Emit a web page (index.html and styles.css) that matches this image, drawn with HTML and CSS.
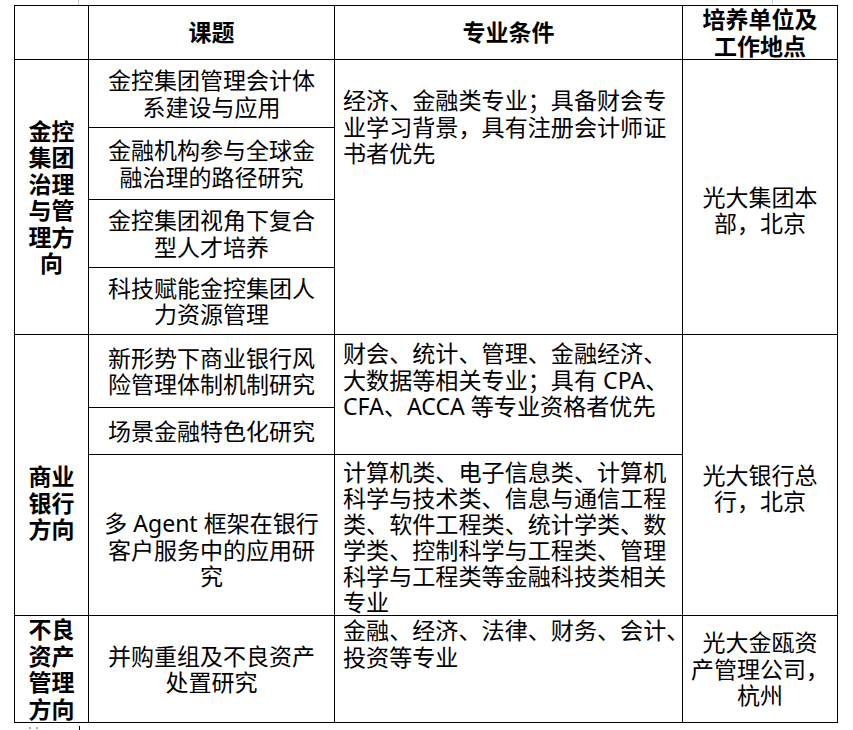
FILE: index.html
```html
<!DOCTYPE html>
<html lang="zh-CN">
<head>
<meta charset="utf-8">
<title>课题</title>
<link rel="stylesheet" href="styles.css">
</head>
<body>
<div class="page">
<table class="grid">
<colgroup><col class="c1"><col class="c2"><col class="c3"><col class="c4"></colgroup>
<tr class="h0"><th></th><th>课题</th><th>专业条件</th><th>培养单位及<br>工作地点</th></tr>
<tr class="h1"><td rowspan="4" class="cat">金控<br>集团<br>治理<br>与管<br>理方<br>向</td><td class="topic">金控集团管理会计体<br>系建设与应用</td><td rowspan="4" class="req req-a">经济、金融类专业；具备财会专<br>业学习背景，具有注册会计师证<br>书者优先</td><td rowspan="4" class="place place-a">光大集团本<br>部，北京</td></tr>
<tr class="h2"><td class="topic">金融机构参与全球金<br>融治理的路径研究</td></tr>
<tr class="h3"><td class="topic">金控集团视角下复合<br>型人才培养</td></tr>
<tr class="h4"><td class="topic">科技赋能金控集团人<br>力资源管理</td></tr>
<tr class="h5"><td rowspan="3" class="cat cat-b">商业<br>银行<br>方向</td><td class="topic">新形势下商业银行风<br>险管理体制机制研究</td><td rowspan="2" class="req req-b">财会、统计、管理、金融经济、<br>大数据等相关专业；具有 CPA、<br>CFA、ACCA 等专业资格者优先</td><td rowspan="3" class="place place-b">光大银行总<br>行，北京</td></tr>
<tr class="h6"><td class="topic">场景金融特色化研究</td></tr>
<tr class="h7"><td class="topic topic-agent">多 Agent 框架在银行<br>客户服务中的应用研<br>究</td><td class="req req-c">计算机类、电子信息类、计算机<br>科学与技术类、信息与通信工程<br>类、软件工程类、统计学类、数<br>学类、控制科学与工程类、管理<br>科学与工程类等金融科技类相关<br>专业</td></tr>
<tr class="h8"><td class="cat cat-c">不良<br>资产<br>管理<br>方向</td><td class="topic">并购重组及不良资产<br>处置研究</td><td class="req req-d">金融、经济、法律、财务、会计、<br>投资等专业</td><td class="place">光大金瓯资<br>产管理公司，<br>杭州</td></tr>
</table>
<span class="mark mark-top1"></span>
<span class="mark mark-top2"></span>
<span class="mark mark-dot1"></span>
<span class="mark mark-dot2"></span>
<span class="mark mark-tick"></span>
</div>
</body>
</html>
```

FILE: styles.css
```css
html, body {
  margin: 0;
  padding: 0;
  background: #fff;
}
.page {
  position: relative;
  width: 853px;
  height: 730px;
  overflow: hidden;
  padding-top: 5px;
  box-sizing: border-box;
}
.grid {
  margin-left: 14px;
  border-collapse: collapse;
  table-layout: fixed;
  width: 824px;
  font-family: "Noto Sans", "Noto Sans CJK SC", sans-serif;
  font-size: 23px;
  line-height: 26.5px;
  color: #000;
  white-space: nowrap;
}
.c1 { width: 74px; }
.c2 { width: 246px; }
.c3 { width: 348px; }
.c4 { width: 155px; }
.grid th, .grid td {
  border: 1px solid #000;
  padding: 0 2px;
  vertical-align: middle;
  text-align: center;
  overflow: visible;
}
.grid th {
  font-weight: bold;
}
.h0 { height: 54px; }
.h1 { height: 68px; }
.h2 { height: 72px; }
.h3 { height: 68px; }
.h4 { height: 67px; }
.h5 { height: 73px; }
.h6 { height: 47px; }
.h7 { height: 161px; }
.h8 { height: 107px; }
.grid .cat {
  font-weight: bold;
}
.grid .cat-b { padding-top: 56px; }
.grid .cat-c { padding-top: 0; padding-bottom: 0; }
.grid .topic-agent { padding-top: 30px; }
.grid .req {
  text-align: left;
  vertical-align: top;
  padding-left: 8px;
  font-size: 23.1px;
}
.grid .req-a { padding-top: 27px; }
.grid .req-b { padding-top: 5px; }
.grid .req-c { padding-top: 4px; padding-bottom: 0; line-height: 26px; }
.grid .req-d { padding-top: 1px; }
.grid .place-a { padding-top: 26px; }
.grid .place-b { padding-top: 26px; }
.mark {
  position: absolute;
  display: block;
}
.mark-top1 { left: 78px; top: 0; width: 1px; height: 5px; background: #c8c8c8; }
.mark-top2 { left: 772px; top: 0; width: 1px; height: 5px; background: #c8c8c8; }
.mark-dot1 { left: 29px; top: 727px; width: 2px; height: 2px; background: #b0b0b0; }
.mark-dot2 { left: 36px; top: 727px; width: 2px; height: 2px; background: #b0b0b0; }
.mark-tick { left: 79px; top: 726px; width: 1px; height: 4px; background: #000; }
```
